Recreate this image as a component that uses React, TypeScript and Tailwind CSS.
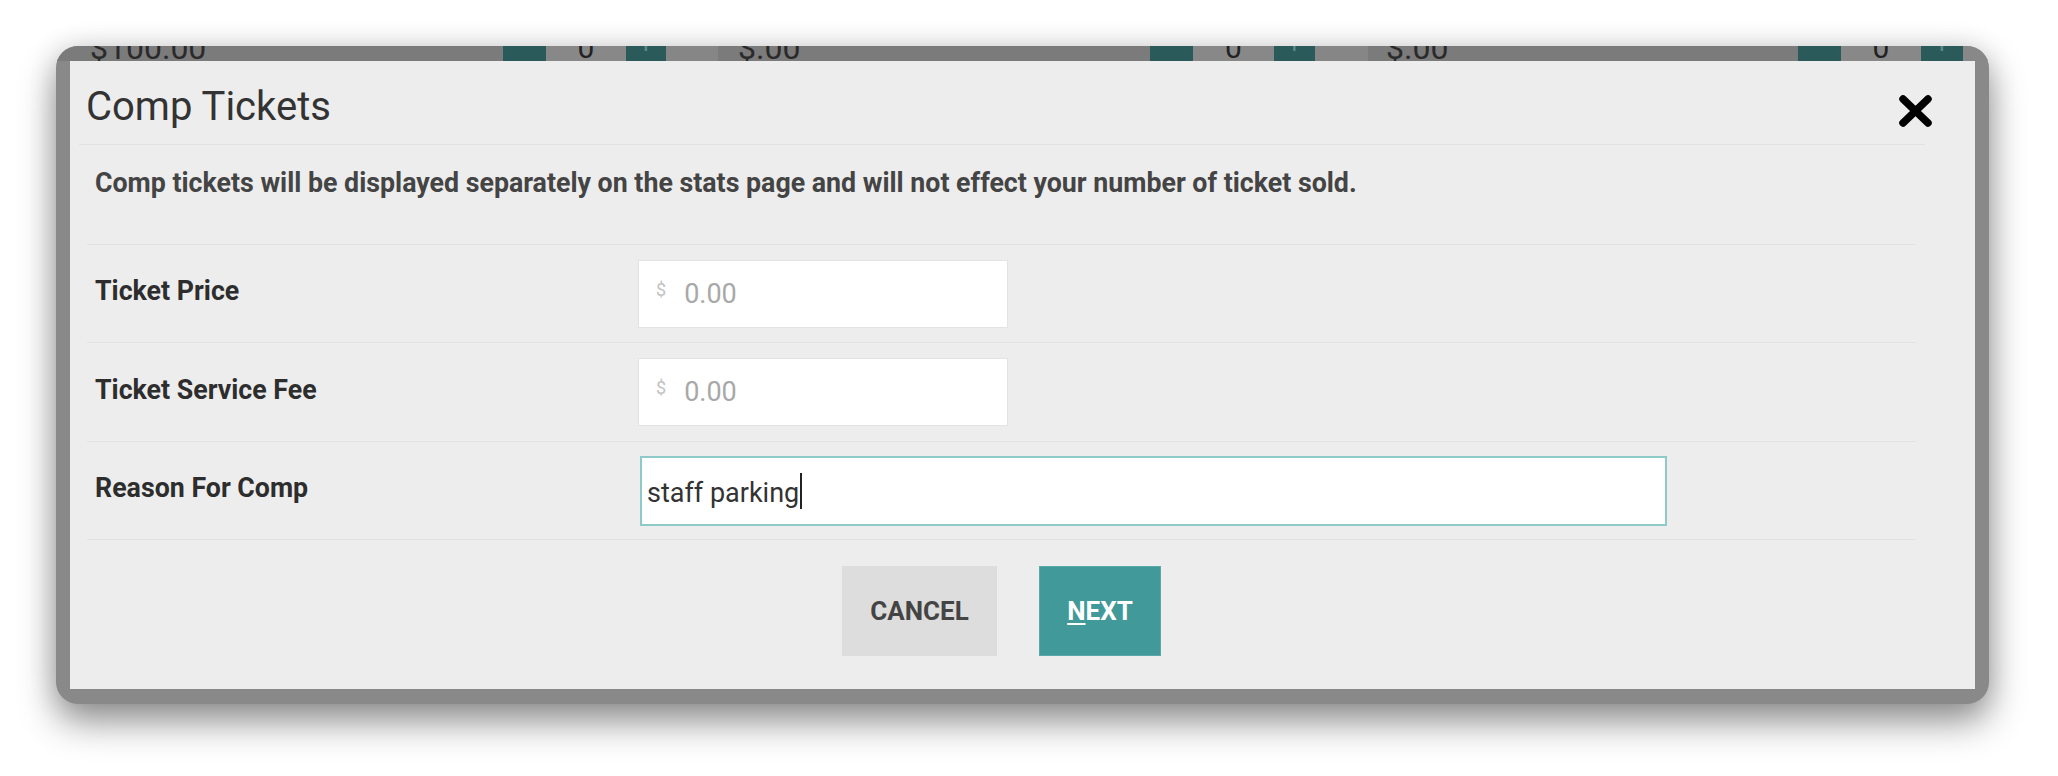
import React from 'react';

// slice of the page that peeks out above the modal
const stripCells = [
  { w: 'w-[447px]', bg: 'bg-[#7b7b7b]', text: '$100.00', kind: 'price', pad: 'pl-[34px]' },
  { w: 'w-[43px]', bg: 'bg-[#2b5a5a]', text: '−', kind: 'btn', pad: '' },
  { w: 'w-[80px]', bg: 'bg-[#888888]', text: '0', kind: 'qty', pad: '' },
  { w: 'w-[40px]', bg: 'bg-[#2b5a5a]', text: '+', kind: 'btn', pad: '' },
  { w: 'w-[52px]', bg: 'bg-[#868686]', text: '', kind: 'gap', pad: '' },
  { w: 'w-[432px]', bg: 'bg-[#7b7b7b]', text: '$.00', kind: 'price', pad: 'pl-[20px]' },
  { w: 'w-[43px]', bg: 'bg-[#2b5a5a]', text: '−', kind: 'btn', pad: '' },
  { w: 'w-[81px]', bg: 'bg-[#888888]', text: '0', kind: 'qty', pad: '' },
  { w: 'w-[41px]', bg: 'bg-[#2b5a5a]', text: '+', kind: 'btn', pad: '' },
  { w: 'w-[53px]', bg: 'bg-[#868686]', text: '', kind: 'gap', pad: '' },
  { w: 'w-[430px]', bg: 'bg-[#7b7b7b]', text: '$.00', kind: 'price', pad: 'pl-[18px]' },
  { w: 'w-[43px]', bg: 'bg-[#2b5a5a]', text: '−', kind: 'btn', pad: '' },
  { w: 'w-[80px]', bg: 'bg-[#888888]', text: '0', kind: 'qty', pad: '' },
  { w: 'w-[42px]', bg: 'bg-[#2b5a5a]', text: '+', kind: 'btn', pad: '' },
  { w: 'flex-1', bg: 'bg-[#888888]', text: '', kind: 'gap', pad: '' },
];

function MoneyInput() {
  return (
    <div className="w-[370px] h-[68px] bg-white border border-[#e3e3e3] flex items-center pl-[17px]">
      <span className="text-[18px] leading-[18px] text-[#c2c2c2] mb-[8px]">$</span>
      <span className="text-[27px] leading-[30px] text-[#a8a8a8] ml-[18px]">0.00</span>
    </div>
  );
}

export default function App() {
  return (
    <div className="w-full h-[776px] bg-white pt-[46px] pl-[56px] font-[Roboto,sans-serif] overflow-hidden">
      {/* window frame */}
      <div className="w-[1933px] h-[658px] rounded-[22px] bg-[#898989] overflow-hidden flex flex-col shadow-[0_18px_36px_rgba(0,0,0,0.42),0_0_28px_rgba(0,0,0,0.12)]">
        {/* background page strip */}
        <div className="h-[15px] flex overflow-hidden">
          {stripCells.map((c, i) => (
            <div
              key={i}
              className={`${c.w} ${c.bg} ${c.pad} h-full flex items-end overflow-hidden ${
                c.kind === 'price' ? '' : 'justify-center'
              }`}
            >
              {c.kind === 'price' && (
                <span className="text-[32px] leading-[24px] text-[#2a2a2a] whitespace-nowrap mb-[1px]">{c.text}</span>
              )}
              {c.kind === 'qty' && (
                <span className="text-[30px] leading-[24px] text-[#222] mb-[1px]">{c.text}</span>
              )}
              {c.kind === 'btn' && (
                <span className="text-[26px] leading-[26px] text-[#5d8b8b] mb-[4px]">{c.text}</span>
              )}
            </div>
          ))}
        </div>

        {/* modal panel */}
        <div className="mx-[14px] h-[628px] bg-[#ededed] flex flex-col">
          {/* header */}
          <div className="ml-[9px] mr-[50px] border-b border-[#e2e2e2] flex items-start justify-between pt-[26px] pb-[16px] pl-[7px]">
            <h1 className="text-[40px] leading-[40px] text-[#333] font-normal">Comp Tickets</h1>
            <svg className="w-[35px] h-[34px] mt-[7px] -mr-[8px]" viewBox="0 0 35 34">
              <path d="M5 5 L30 29 M30 5 L5 29" stroke="#000" strokeWidth="7.5" strokeLinecap="round" fill="none" />
            </svg>
          </div>

          {/* body */}
          <div className="ml-[17px] mr-[59px] flex flex-col">
            <p className="h-[99px] pt-[23px] pl-[8px] text-[26.75px] leading-[30px] font-bold text-[#444]">
              Comp tickets will be displayed separately on the stats page and will not effect your number of ticket sold.
            </p>

            <div className="h-[98px] border-t border-[#e2e2e2] flex items-center">
              <div className="w-[551px] pl-[8px] pb-[5px] text-[26.75px] leading-[30px] font-bold text-[#2d2d2d]">Ticket Price</div>
              <MoneyInput />
            </div>

            <div className="h-[99px] border-t border-[#e2e2e2] flex items-center">
              <div className="w-[551px] pl-[8px] pb-[5px] text-[26.75px] leading-[30px] font-bold text-[#2d2d2d]">Ticket Service Fee</div>
              <MoneyInput />
            </div>

            <div className="h-[99px] border-t border-b border-[#e2e2e2] flex items-center">
              <div className="w-[551px] pl-[8px] pb-[5px] text-[26.75px] leading-[30px] font-bold text-[#2d2d2d]">Reason For Comp</div>
              <div className="ml-[2px] w-[1027px] h-[70px] bg-white border-2 border-[#8fcaca] flex items-center pl-[5px]">
                <span className="text-[27px] leading-[30px] text-[#333] mt-[4px]">staff parking</span>
                <span className="w-[2px] h-[36px] bg-[#222] ml-[1px]" />
              </div>
            </div>

            {/* footer buttons */}
            <div className="flex justify-center gap-[42px] pt-[26px]">
              <button className="w-[155px] h-[90px] bg-[#dddddd] text-[#444] text-[26px] font-bold">CANCEL</button>
              <button className="w-[122px] h-[90px] bg-[#429999] border border-[#5aa8a8] text-white text-[26px] font-bold">
                <span className="underline decoration-2 underline-offset-[3px]">N</span>EXT
              </button>
            </div>
          </div>
        </div>
      </div>
    </div>
  );
}
